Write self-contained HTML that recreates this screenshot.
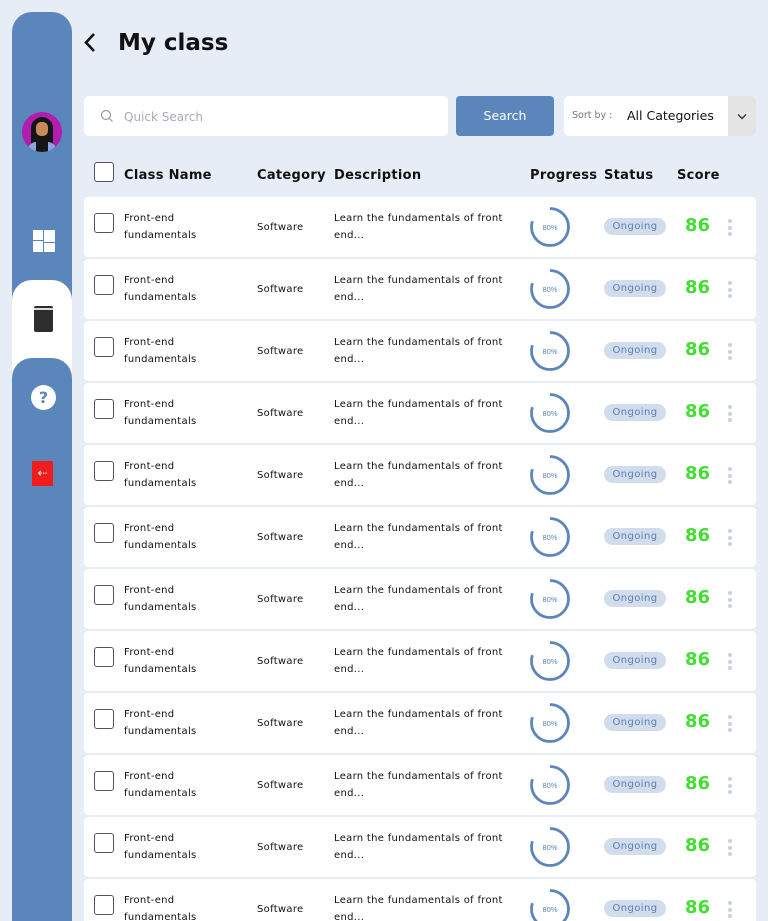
<!DOCTYPE html>
<html style="overflow:hidden;width:768px;height:921px"><head><style>
*{margin:0;padding:0;box-sizing:border-box}
body{width:768px;height:921px;overflow:hidden;background:#e6edf7;font-family:"DejaVu Sans","Liberation Sans",sans-serif;position:relative;color:#111}
.sb{position:absolute;left:12px;top:12px;width:60px;height:909px;background:#5a86bc;border-radius:20px 20px 0 0;overflow:hidden}
.act{position:absolute;left:0;top:268px;width:60px;height:110px;background:#fff;border-radius:20px 20px 0 0}
.sb2{position:absolute;left:0;top:346px;width:60px;height:600px;background:#5a86bc;border-radius:20px 20px 0 0}
h1{position:absolute;left:118px;top:30px;font-size:23px;font-weight:bold;letter-spacing:0}
.search{position:absolute;left:84px;top:96px;width:364px;height:40px;background:#fff;border-radius:5px}
.search span{position:absolute;left:40px;top:14px;font-size:12px;color:#aab}
.btn{position:absolute;left:456px;top:96px;width:98px;height:40px;background:#5a86bc;border-radius:4px;color:#fff;font-size:12.5px;text-align:center;line-height:40px}
.sort{position:absolute;left:564px;top:96px;width:192px;height:40px;background:#fff;border-radius:5px;overflow:hidden}
.sort .l{position:absolute;left:8px;top:14px;font-size:9.5px;color:#777}
.sort .v{position:absolute;left:63px;top:12px;font-size:12.5px}
.sort .d{position:absolute;right:0;top:0;width:28px;height:40px;background:#e5e5e5}
.hd{position:absolute;top:168px;font-size:13px;font-weight:bold;letter-spacing:.3px}
.cb{position:absolute;width:20px;height:20px;border:1.3px solid #555;border-radius:3px;background:#fff}
.row{position:absolute;left:84px;width:672px;height:60px;background:#fff;border-radius:4px}
.row .t{position:absolute;font-size:10px;line-height:17px;letter-spacing:.3px}
.pill{position:absolute;left:520px;top:21px;width:62px;height:17px;background:#d1dcec;border-radius:9px;color:#5a7db0;font-size:10px;text-align:center;line-height:17px;letter-spacing:.4px}
.sc{position:absolute;left:601px;top:18px;font-size:18px;font-weight:bold;color:#44dd33}
.dots{position:absolute;left:644px;top:22px;width:4px}
.dots i{display:block;width:4px;height:4px;border-radius:2px;background:#c8d2e0;margin-bottom:2.5px}
svg.p{position:absolute;left:445px;top:9px}
</style></head><body>
<div class="sb">
 <div style="position:absolute;left:10px;top:100px;width:40px;height:40px;border-radius:50%;background:#b21cb0;overflow:hidden">
  <div style="position:absolute;left:9px;top:5px;width:22px;height:30px;background:#151515;border-radius:11px 11px 4px 4px"></div>
  <div style="position:absolute;left:14px;top:10px;width:12px;height:14px;background:#c98a5a;border-radius:5px"></div>
  <div style="position:absolute;left:6px;top:30px;width:28px;height:12px;background:#8aa6d8;border-radius:8px 8px 0 0"></div>
  <div style="position:absolute;left:14px;top:28px;width:12px;height:14px;background:#151515"></div>
 </div>
 <div style="position:absolute;left:21px;top:218px;width:10px;height:10px;background:#fff"></div>
 <div style="position:absolute;left:32px;top:218px;width:11px;height:12px;background:#fff"></div>
 <div style="position:absolute;left:21px;top:229px;width:10px;height:11px;background:#fff"></div>
 <div style="position:absolute;left:32px;top:231px;width:11px;height:9px;background:#fff"></div>
 <div class="act"><div style="position:absolute;left:22px;top:26px;width:19px;height:26px;background:#2d2d2d;border-radius:2px;border-top:2px solid #2d2d2d;box-shadow:inset 0 2px 0 #ddd"></div></div>
 <div class="sb2">
  <div style="position:absolute;left:19px;top:27px;width:25px;height:25px;border-radius:50%;background:#fff;color:#5a86bc;font-weight:bold;font-size:16px;text-align:center;line-height:25px">?</div>
  <div style="position:absolute;left:20px;top:103px;width:21px;height:25px;background:#f21c1c;color:#fff;font-size:12px;line-height:25px;text-align:center">⇠</div>
 </div>
</div>
<svg style="position:absolute;left:82px;top:31px" width="16" height="24"><path d="M12 3 L4 11.5 L12 20" fill="none" stroke="#111" stroke-width="2.6"/></svg>
<h1>My class</h1>
<div class="search"><svg style="position:absolute;left:16px;top:13px" width="14" height="14"><circle cx="6" cy="6" r="4.5" fill="none" stroke="#999" stroke-width="1.2"/><path d="M9.5 9.5 L12.5 12.5" stroke="#999" stroke-width="1.2"/></svg><span>Quick Search</span></div>
<div class="btn">Search</div>
<div class="sort"><span class="l">Sort by :</span><span class="v">All Categories</span><div class="d"><svg style="position:absolute;left:9px;top:17px" width="11" height="8"><path d="M1 1.5 L5 5.5 L9 1.5" fill="none" stroke="#333" stroke-width="1.4"/></svg></div></div>
<div class="cb" style="left:94px;top:162px"></div>
<div class="hd" style="left:124px">Class Name</div>
<div class="hd" style="left:257px">Category</div>
<div class="hd" style="left:334px">Description</div>
<div class="hd" style="left:530px">Progress</div>
<div class="hd" style="left:604px">Status</div>
<div class="hd" style="left:677px">Score</div>
<div id="rows"></div>
<script>
var h='';
for(var i=0;i<12;i++){var y=197+i*62;
h+='<div class="row" style="top:'+y+'px"><div class="cb" style="left:10px;top:16px"></div>'+
'<div class="t" style="left:40px;top:13px">Front-end<br>fundamentals</div>'+
'<div class="t" style="left:173px;top:22px">Software</div>'+
'<div class="t" style="left:250px;top:13px">Learn the fundamentals of front<br>end...</div>'+
'<svg class="p" width="42" height="42"><circle cx="21" cy="21" r="18.5" fill="none" stroke="#5a86bc" stroke-width="2.8" stroke-dasharray="93 200" transform="rotate(-90 21 21)"/><text x="21" y="24" font-size="7.5" fill="#5a86bc" text-anchor="middle" font-family="Liberation Sans,sans-serif">80%</text></svg>'+
'<div class="pill">Ongoing</div><div class="sc">86</div><div class="dots"><i></i><i></i><i></i></div></div>';}
document.getElementById('rows').innerHTML=h;
</script>
</body></html>
